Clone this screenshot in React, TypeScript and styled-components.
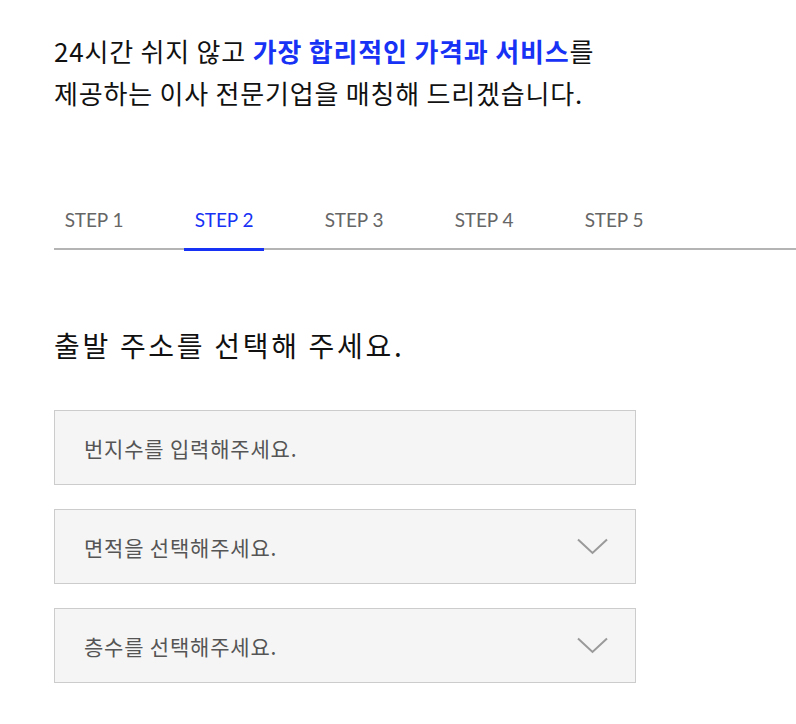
import React from "react";
import styled, { createGlobalStyle } from "styled-components";

const Global = createGlobalStyle`
  html, body { margin: 0; padding: 0; background: #fff; }
  body { font-family: "Noto Sans CJK KR", "Noto Sans", sans-serif; }
  * { box-sizing: border-box; }
`;

const Page = styled.div`
  padding: 30px 0 40px 54px;
  width: 796px;
`;

const Headline = styled.p`
  margin: 0;
  font-size: 26px;
  line-height: 42px;
  color: #111;
  font-weight: 400;
  letter-spacing: 0.8px;
`;

const Accent = styled.strong`
  color: #1732f5;
  font-weight: 700;
`;

const Tabs = styled.ul`
  list-style: none;
  margin: 76px 0 0;
  padding: 0;
  display: flex;
  gap: 50px;
  border-bottom: 2px solid #b4b4b4;
`;

const Tab = styled.li<{ $active?: boolean }>`
  position: relative;
  width: 80px;
  height: 58px;
  display: flex;
  align-items: center;
  justify-content: center;
  font-family: Lato, "Noto Sans", sans-serif;
  font-size: 19px;
  letter-spacing: -0.1px;
  color: ${(p) => (p.$active ? "#1732f5" : "#666")};
  &::after {
    content: "";
    display: ${(p) => (p.$active ? "block" : "none")};
    position: absolute;
    left: 0;
    right: 0;
    bottom: -3px;
    height: 3px;
    background: #1732f5;
  }
`;

const Title = styled.h2`
  margin: 75px 0 0;
  font-size: 28px;
  line-height: 40px;
  font-weight: 400;
  letter-spacing: 2.7px;
  color: #111;
`;

const Fields = styled.div`
  margin-top: 45px;
  width: 582px;
  display: flex;
  flex-direction: column;
  gap: 24px;
`;

const Field = styled.div`
  height: 75px;
  background: #f5f5f5;
  border: 1px solid #cccccc;
  display: flex;
  align-items: center;
  justify-content: space-between;
  padding: 0 27px 0 29px;
  font-size: 21px;
  color: #555;
  letter-spacing: 0.8px;
`;

const Chevron = () => (
  <svg width="31" height="17" viewBox="0 0 31 17" fill="none">
    <path d="M1 1.5 L15.5 15 L30 1.5" stroke="#9a9a9a" strokeWidth="2" />
  </svg>
);

export default function App() {
  const steps = ["STEP 1", "STEP 2", "STEP 3", "STEP 4", "STEP 5"];
  return (
    <>
      <Global />
      <Page>
        <Headline>
          24시간 쉬지 않고 <Accent>가장 합리적인 가격과 서비스</Accent>를
          <br />
          제공하는 이사 전문기업을 매칭해 드리겠습니다.
        </Headline>
        <Tabs>
          {steps.map((s, i) => (
            <Tab key={s} $active={i === 1}>
              {s}
            </Tab>
          ))}
        </Tabs>
        <Title>출발 주소를 선택해 주세요.</Title>
        <Fields>
          <Field>번지수를 입력해주세요.</Field>
          <Field>
            면적을 선택해주세요.
            <Chevron />
          </Field>
          <Field>
            층수를 선택해주세요.
            <Chevron />
          </Field>
        </Fields>
      </Page>
    </>
  );
}
